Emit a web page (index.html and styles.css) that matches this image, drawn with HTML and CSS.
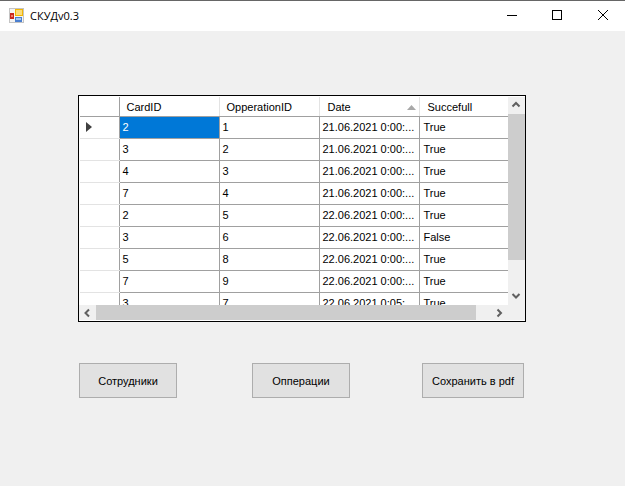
FILE: index.html
```html
<!DOCTYPE html>
<html>
<head>
	<title>СКУДv0.3</title>
	<meta charset="utf-8" />
	<link rel="stylesheet" href="styles.css">
</head>
<body>
	<div class="titlebar">
		<svg class="appicon" viewBox="0 0 16 16" width="16" height="16">
			<rect x="0" y="0" width="15" height="15" fill="#c4c4c4" />
			<rect x="1" y="1" width="13" height="13" fill="#f4f4f4" />
			<rect x="6" y="1" width="8" height="7" fill="#f2b705" />
			<rect x="7" y="2" width="6" height="5" fill="#fbdc7a" />
			<rect x="1" y="5" width="4" height="6" fill="#c8261e" />
			<rect x="2" y="7" width="2" height="2" fill="#ef7a6a" />
			<rect x="6" y="9" width="7" height="5" fill="#4a7fd0" />
			<rect x="7" y="10" width="5" height="2" fill="#a8c8f0" />
		</svg>
		<span class="apptitle">СКУДv0.3</span>
		<div class="winbtns">
			<svg class="winbtn" viewBox="0 0 46 30" width="46" height="30">
				<line x1="20" y1="14.5" x2="30" y2="14.5" />
			</svg>
			<svg class="winbtn" viewBox="0 0 46 30" width="46" height="30">
				<rect x="19.5" y="9.5" width="9" height="9" />
			</svg>
			<svg class="winbtn" viewBox="0 0 46 30" width="46" height="30">
				<line x1="19" y1="9" x2="29" y2="19" />
				<line x1="29" y1="9" x2="19" y2="19" />
			</svg>
		</div>
	</div>

	<div class="client">
		<div class="grid">
			<div class="grid-top">
				<div class="grid-view">
					<table class="rows">
						<thead>
							<tr>
								<th class="rowhead"></th>
								<th>CardID</th>
								<th>OpperationID</th>
								<th class="sorted">Date<svg class="sortmark" viewBox="0 0 9 5" width="9" height="5"><polygon points="4.5,0 9,5 0,5" /></svg></th>
								<th>Succefull</th>
							</tr>
						</thead>
						<tbody>
							<tr><td class="rowhead"><svg viewBox="0 0 6 10" width="6" height="10"><polygon points="0,0 6,5 0,10" /></svg></td><td class="selected">2</td><td>1</td><td>21.06.2021 0:00:...</td><td>True</td></tr>
							<tr><td class="rowhead"></td><td>3</td><td>2</td><td>21.06.2021 0:00:...</td><td>True</td></tr>
							<tr><td class="rowhead"></td><td>4</td><td>3</td><td>21.06.2021 0:00:...</td><td>True</td></tr>
							<tr><td class="rowhead"></td><td>7</td><td>4</td><td>21.06.2021 0:00:...</td><td>True</td></tr>
							<tr><td class="rowhead"></td><td>2</td><td>5</td><td>22.06.2021 0:00:...</td><td>True</td></tr>
							<tr><td class="rowhead"></td><td>3</td><td>6</td><td>22.06.2021 0:00:...</td><td>False</td></tr>
							<tr><td class="rowhead"></td><td>5</td><td>8</td><td>22.06.2021 0:00:...</td><td>True</td></tr>
							<tr><td class="rowhead"></td><td>7</td><td>9</td><td>22.06.2021 0:00:...</td><td>True</td></tr>
							<tr><td class="rowhead"></td><td>3</td><td>7</td><td>22.06.2021 0:05:...</td><td>True</td></tr>
						</tbody>
					</table>
				</div>
				<div class="vscroll">
					<svg class="arrow" viewBox="0 0 17 17" width="17" height="17"><polyline points="4.5,9.5 8,6 11.5,9.5" /></svg>
					<div class="vtrack"><div class="vthumb"></div></div>
					<svg class="arrow" viewBox="0 0 17 17" width="17" height="17"><polyline points="4.5,6 8,9.5 11.5,6" /></svg>
				</div>
			</div>
			<div class="hscroll">
				<svg class="arrow" viewBox="0 0 17 15" width="17" height="15"><polyline points="10,4.5 6.5,8 10,11.5" /></svg>
				<div class="htrack"><div class="hthumb"></div></div>
				<svg class="arrow" viewBox="0 0 17 15" width="17" height="15"><polyline points="6.5,4.5 10,8 6.5,11.5" /></svg>
				<div class="corner"></div>
			</div>
		</div>

		<div class="actions">
			<button class="btn">Сотрудники</button>
			<button class="btn">Опперации</button>
			<button class="btn">Сохранить в pdf</button>
		</div>
	</div>
</body>
</html>
```

FILE: styles.css
```css
html, body { margin: 0; height: 100%; }
body {
	display: flex; flex-direction: column;
	font-family: "Liberation Sans", Arial, sans-serif; font-size: 11px;
	color: #000; background: #f0f0f0; overflow: hidden;
}

/* title bar */
.titlebar {
	display: flex; align-items: center;
	height: 30px; background: #fff; flex: none;
	border-top: 1px solid #666;
}
.appicon { margin-left: 9px; }
.apptitle { margin: -1px 0 0 5px; font-family: "Open Sans", sans-serif; font-size: 11px; }
.winbtns { display: flex; margin-left: auto; }
.winbtn { display: block; fill: none; stroke: #000; stroke-width: 1; }

/* data grid */
.client { flex: 1; padding: 64px 0 0 78px; }
.grid {
	display: flex; flex-direction: column;
	width: 446px; height: 225px;
	border: 1px solid #000; background: #fff;
}
.grid-top { display: flex; height: 209px; padding-top: 1px; padding-left: 1px; box-sizing: border-box; }
.grid-view { width: 428px; overflow: hidden; }
.rows { border-collapse: collapse; table-layout: fixed; width: 428px; }
.rows th, .rows td {
	padding: 0 0 0 3px; box-sizing: border-box;
	font-weight: normal; text-align: left; white-space: nowrap; overflow: hidden;
	border-right: 1px solid #a0a0a0; border-bottom: 1px solid #a0a0a0;
}
.rows tr { height: 22px; }
.rows thead tr { height: 19px; }
.rows th { padding: 1px 0 0 7px; border-right-color: #e3e3e3; position: relative; }
.rows th:nth-child(1) { width: 39px; }
.rows th:nth-child(2), .rows th:nth-child(3), .rows th:nth-child(4) { width: 100px; }
.rows th:first-child { border-right-color: #a0a0a0; }
.rows th.sorted { padding-left: 8px; }
.rows td:last-child { border-right: 0; padding-left: 4px; }
.rows th:last-child { border-right: 0; padding-left: 8px; }
.rows td.rowhead { padding: 0 0 0 6px; border-bottom-color: #e3e3e3; border-right-color: #a0a0a0; }
.rows td.rowhead svg { display: block; fill: #404040; }
.rows td.selected { background: #0078d7; color: #fff; }
.sortmark { position: absolute; right: 3px; top: 8px; fill: #a8a8a8; }

/* scrollbars */
.arrow { display: block; flex: none; fill: none; stroke: #606060; stroke-width: 2; }
.vscroll { display: flex; flex-direction: column; width: 17px; background: #f0f0f0; }
.vtrack { flex: 1; }
.vthumb { height: 146px; background: #cdcdcd; }
.hscroll { display: flex; height: 15px; background: #f0f0f0; }
.htrack { flex: 1; }
.hthumb { width: 380px; height: 100%; background: #cdcdcd; }
.corner { width: 17px; background: #f0f0f0; }

/* buttons */
.actions { display: flex; margin-top: 41px; padding-left: 1px; }
.btn {
	width: 98px; height: 35px; padding: 0; margin-right: 75px;
	font: inherit; color: #000;
	background: #e1e1e1; border: 1px solid #adadad;
}
.btn:nth-child(2) { margin-right: 72px; }
.btn:last-child { width: 102px; margin-right: 0; }
```
